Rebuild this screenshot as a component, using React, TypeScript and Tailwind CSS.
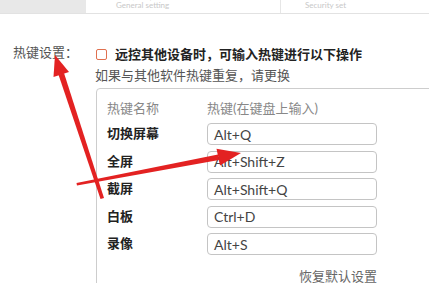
import React from 'react'

const hotkeys = [
  { name: '切换屏幕', value: 'Alt+Q' },
  { name: '全屏', value: 'Alt+Shift+Z' },
  { name: '截屏', value: 'Alt+Shift+Q' },
  { name: '白板', value: 'Ctrl+D' },
  { name: '录像', value: 'Alt+S' },
]

function Arrows() {
  return (
    <svg
      className="pointer-events-none absolute left-0 top-0"
      width={429}
      height={283}
      viewBox="0 0 429 283"
    >
      {/* arrow pointing at the label */}
      <polygon points="55,55 69,72 53.5,77" fill="#e32222" />
      <polygon points="58.5,74.8 64,73 104,198 100.5,199" fill="#e32222" />
      {/* arrow pointing at the second input */}
      <polygon points="241,153 220,165.5 216.5,148.8" fill="#e32222" />
      <polygon points="218,154.5 219,160 77,185.5 76.5,183" fill="#e32222" />
    </svg>
  )
}

export default function App() {
  return (
    <div
      className="relative h-[283px] w-[429px] overflow-hidden bg-white"
      style={{ fontFamily: '"Lato", "Noto Sans CJK SC", sans-serif' }}
    >
      <div className="flex h-[14px] border-b border-[#e2e2e2]">
        <div className="w-[86px] shrink-0 bg-[#e8e8e8]" />
        <div className="w-[195px] shrink-0 overflow-hidden border-r border-[#e6e6e6] pl-[30px]">
          <div className="-mt-[12px] flex flex-col">
            <span className="h-[13px] text-[12px] leading-[13px] font-bold text-[#333]">常规设置</span>
            <span className="text-[8px] leading-[9px] text-[#c8c8c8]">General setting</span>
          </div>
        </div>
        <div className="flex-1 overflow-hidden pl-[24px]">
          <div className="-mt-[12px] flex flex-col">
            <span className="h-[13px] text-[12px] leading-[13px] font-bold text-[#333]">安全设置</span>
            <span className="text-[8px] leading-[9px] text-[#c8c8c8]">Security set</span>
          </div>
        </div>
      </div>

      <div className="flex">
        <div className="w-[95px] shrink-0 whitespace-nowrap pl-[13px] pt-[28px] text-[13px] leading-[20px] text-[#555]">
          热键设置：
        </div>
        <div className="flex shrink-0 flex-col pt-[30px]">
          <div className="flex items-center gap-[8px] whitespace-nowrap pl-[1px] text-[13px] leading-[20px] font-bold text-[#222]">
            <span className="h-[11px] w-[11px] shrink-0 rounded-[2px] border-[1.5px] border-[#e0704f]" />
            远控其他设备时，可输入热键进行以下操作
          </div>
          <div className="mt-[1px] whitespace-nowrap text-[13px] leading-[20px] text-[#555]">
            如果与其他软件热键重复，请更换
          </div>
          <div className="ml-[1px] mt-[3px] w-[360px] rounded-tl-[4px] border border-[#cdcdcd] pl-[10px] pt-[9px] pb-[20px]">
            <div className="flex text-[13px] leading-[20px] text-[#888]">
              <span className="w-[100px] shrink-0">热键名称</span>
              <span>热键(在键盘上输入)</span>
            </div>
            <div className="mt-[5px] flex flex-col gap-[5.5px]">
              {hotkeys.map((k) => (
                <div key={k.name} className="flex items-center">
                  <span className="w-[100px] shrink-0 text-[13px] font-semibold text-[#222]">{k.name}</span>
                  <div className="flex h-[22px] w-[170px] items-center rounded-[4px] border border-[#c4c4c4] pl-[6px] text-[14px] text-[#444]">
                    {k.value}
                  </div>
                </div>
              ))}
            </div>
            <div className="mt-[11px] w-[270px] text-right text-[13px] leading-[20px] text-[#666]">
              恢复默认设置
            </div>
          </div>
        </div>
      </div>

      <Arrows />
    </div>
  )
}
